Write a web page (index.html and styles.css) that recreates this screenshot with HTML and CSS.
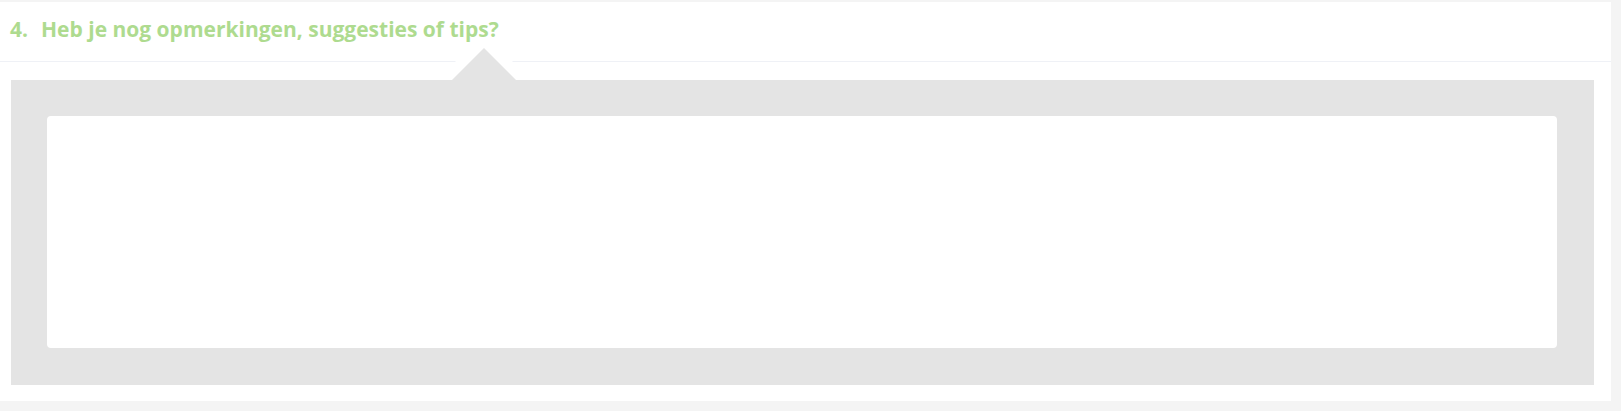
FILE: index.html
```html
<!DOCTYPE html>
<html lang="nl">
<head>
    <meta charset="UTF-8">
    <meta name="viewport" content="width=device-width, initial-scale=1.0">
    <title>Vraag 4</title>
    <link rel="stylesheet" href="styles.css">
</head>
<body>
    <div class="question">
        <div class="question-header">
            <h2 class="question-title"><span class="question-nr">4.</span>Heb je nog opmerkingen, suggesties of tips?</h2>
        </div>
        <div class="question-body">
            <div class="answer-box">
                <textarea class="answer" name="q4"></textarea>
            </div>
        </div>
    </div>
</body>
</html>
```

FILE: styles.css
```css
body {
    margin: 0;
    padding-top: 2px;
    background: #f4f4f4;
    font-family: 'Open Sans', 'Noto Sans', sans-serif;
}
.question {
    width: 1611px;
    height: 399px;
    background: white;
}
.question-header {
    padding: 13px 10px 18px;
    border-bottom: 1px solid #eff1f6;
}
.question-title {
    position: relative;
    z-index: 1;
    margin: 0;
    font-size: 21px;
    line-height: 28px;
    font-weight: 700;
    color: #aedb8f;
}
.question-nr {
    margin-right: 13px;
}
.question-body {
    padding: 18px 17px 16px 11px;
}
.answer-box {
    position: relative;
    padding: 36px 37px 37px 36px;
    background: #e4e4e4;
}
/* arrow pointing up at the title, white edge cuts the header line */
.answer-box::before,
.answer-box::after {
    content: '';
    position: absolute;
    width: 0;
    height: 0;
    border-style: solid;
    border-color: transparent;
}
.answer-box::before {
    top: -47px;
    left: 426px;
    border-width: 0 47px 47px;
    border-bottom-color: white;
}
.answer-box::after {
    top: -32px;
    left: 441px;
    border-width: 0 32px 32px;
    border-bottom-color: #e4e4e4;
}
.answer {
    display: block;
    box-sizing: border-box;
    width: 100%;
    height: 232px;
    padding: 10px;
    border: none;
    border-radius: 4px;
    background: white;
    resize: none;
    outline: none;
    font-family: inherit;
    font-size: 14px;
}
```
